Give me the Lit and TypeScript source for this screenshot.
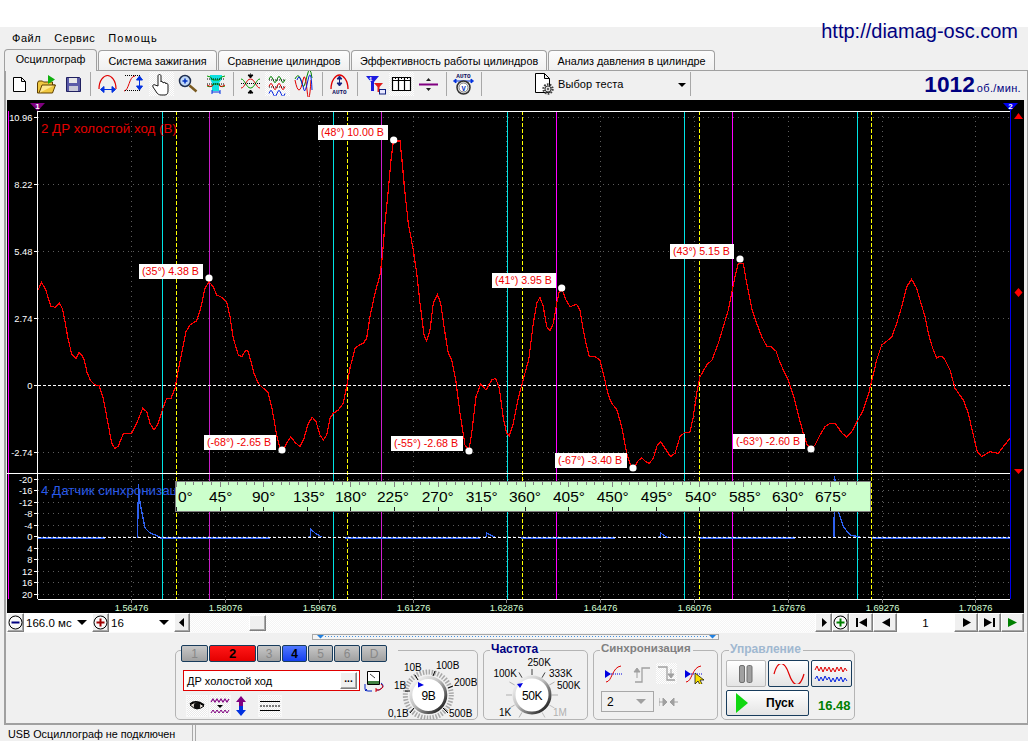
import { LitElement, html, svg, css } from 'lit';
import { customElement } from 'lit/decorators.js';

// red trace, screen coordinates read from the reference
const RED: [number, number][] = [
  [38, 290], [41.7, 282.3], [46, 290.7], [50.7, 306], [55, 307.3], [59.3, 303.3], [62.3, 308.3], [65, 321.7], [68.3, 340], [71.7, 354], [76, 358.3], [79.3, 352.3], [82.7, 356.7],
  [84.3, 360], [87.3, 373.3], [90.7, 380.7], [95, 385], [99, 385.3], [103.3, 398.3], [108.3, 425], [111.7, 443.3], [115, 448.7], [118.3, 446], [123.3, 434], [131.7, 433.3], [136.7, 423.3], [142.7, 408.3], [146.7, 411.7], [150, 423.3], [154, 430], [158.3, 423.3], [162.3, 410], [166.7, 398.3], [171, 398.3], [175, 388.3], [177.7, 373.3], [180.4, 360],
  [186, 331.7], [190, 325], [196.7, 320.7], [200.7, 308.3], [205, 288.3], [209, 281.7], [213.3, 286.7], [216.7, 295], [221.7, 297.3], [226.7, 301.7], [230, 316.7], [233.3, 338.3], [238.3, 355], [241.7, 356.7], [246, 350], [248.3, 351.7], [250.5, 360],
  [254, 373.3], [258.3, 383.3], [263.3, 388.3], [267.7, 391.7], [271.7, 406.7], [276.7, 435], [280, 448.3], [283.3, 450], [286.7, 443.3], [290.7, 436.7], [295, 442.3], [300, 446.7], [304, 438.3], [308.3, 423.3], [312.3, 417.3], [316, 421.7], [320, 435], [323.3, 440], [326.7, 435], [330, 418.3], [333.3, 413.3], [338.3, 410], [343.3, 403.3], [346.7, 386.7], [350, 368],
  [355, 348.3], [358.3, 345.7], [363.3, 343.3], [366.7, 338.3], [370, 316.7], [375, 293.3], [380, 275], [382.3, 256.7], [385, 223.3], [388.3, 190], [391, 160], [393.3, 141.7], [400, 140.7], [402.3, 163.3], [405, 193.3], [408.3, 223.3], [413.3, 250], [416.7, 273.3], [420, 303.3], [424, 335], [426.7, 341], [430, 330], [433.3, 303.3], [437.3, 294.3], [440.7, 303.3], [444, 326.7], [448.3, 353.3], [451.7, 360],
  [456, 381.7], [460, 413.3], [465, 445], [469, 450], [471.7, 433.3], [476, 396.7], [480.7, 384], [486, 390], [491.7, 380], [495.7, 378.3], [499.3, 388.3], [503.3, 418.3], [506.7, 433.3], [509.3, 436], [513.3, 423.3], [518.3, 398.3], [522.7, 381.7], [526.7, 366.7], [528.7, 360],
  [533.3, 323.3], [536.7, 303.3], [540, 297.3], [543.3, 306.7], [546.7, 326.7], [550, 331], [553.3, 323.3], [556.7, 303.3], [559.3, 291.7], [562.3, 290], [566, 300], [570, 306.7], [576.7, 304.3], [580, 310], [583.3, 330], [586.7, 346.7], [589.3, 356.7], [595, 356.7], [600, 360],
  [604, 376.7], [608.3, 395], [611.7, 403.3], [616.7, 409.3], [621.7, 426.7], [626.7, 453.3], [630.7, 466], [634, 468.3], [637.3, 461.7], [641.7, 457.7], [645.7, 461.7], [649.3, 463.3], [653.3, 458.3], [657.3, 445], [660.7, 441.7], [665, 448.3], [670.7, 456.7], [675, 453.3], [680, 436.7], [684.3, 432.7], [690, 432],
  [693.3, 416.7], [696.7, 393.3], [700, 376.7], [706.7, 365], [712, 360],
  [718.3, 343.3], [723.3, 326.7], [728.3, 310], [732.3, 290], [735, 276.7], [738.3, 263.3], [743.3, 263.3], [746.7, 283.3], [751.7, 308.3], [756.7, 323.3], [761.7, 336.7], [766.7, 346], [771, 346.7], [776, 351], [779, 360],
  [783.3, 370], [788.3, 380], [793.3, 395], [798.3, 415], [803.3, 433.3], [807.3, 445], [810.7, 449], [815, 445], [820, 435], [825, 426.7], [830, 423.3], [835.7, 424], [841.7, 432.7], [846.7, 437.3], [851.7, 431.7], [858.3, 419.3], [863.3, 410], [868.3, 395], [872.7, 376.7], [876.7, 360],
  [881.7, 345], [891.7, 337.3], [896.7, 323.3], [901.7, 306.7], [906.7, 286.7], [911.7, 279.3], [916.7, 288.3], [920, 300], [925, 316.7], [928.3, 333.3], [932.7, 348.3], [936.7, 358.3], [940, 356], [943.3, 357.3], [945, 360],
  [950, 370], [955, 388.3], [963.3, 400], [968.3, 413.3], [973.3, 435], [977.3, 451.7], [981.7, 456.7], [990, 451.7], [998.3, 453.3], [1003.3, 446.7], [1010, 438.3],
];

// sync channel pieces: flat runs and decay pulses
const BLUE_FLAT: [number, number][] = [[38, 105], [160, 270], [345, 480], [521, 615], [700, 795], [872, 1010]];
const BLUE_PULSE: [number, number][][] = [
  [[137.5, 538], [138.5, 484], [140, 503], [145, 528], [150, 533], [160, 537]],
  [[310, 538], [310.7, 529], [315, 533], [321.7, 537]],
  [[486, 537], [486.5, 533], [495, 537]],
  [[660, 537], [660.5, 533], [668, 538]],
  [[834, 538], [834.5, 476], [838.3, 511.7], [843.3, 526.7], [850, 535], [860, 537]],
];

const UPPER_AXIS = [['10.96', 117], ['8.22', 184.5], ['5.48', 251.5], ['2.74', 318.5], ['0', 385], ['-2.74', 452.5]] as const;
const LOWER_AXIS = ['-20', '-16', '-12', '-8', '-4', '0', '4', '8', '12', '16', '20'];
const TIMES = ['1.56476', '1.58076', '1.59676', '1.61276', '1.62876', '1.64476', '1.66076', '1.67676', '1.69276', '1.70876'];
const CYAN = [162, 333, 507, 684, 857];
const YELLOW = [176, 347, 522, 699, 871];
const MAGENTA: [number, string][] = [[209, '#c81ec8'], [381, '#d01ed0'], [556, '#ff00ff'], [732, '#ff00ff']];

// label box x, y, width, text, then the peak dot
const MARKS: [number, number, number, string, number, number][] = [
  [139, 264, 64, '(35°) 4.38 В', 209, 278],
  [318, 125, 70, '(48°) 10.00 В', 393.7, 140],
  [492, 273, 64, '(41°) 3.95 В', 561.7, 288],
  [670, 244, 64, '(43°) 5.15 В', 740, 259],
  [204, 435, 72, '(-68°) -2.65 В', 282, 450],
  [391, 436, 72, '(-55°) -2.68 В', 469, 451],
  [555, 453, 72, '(-67°) -3.40 В', 633, 468],
  [733, 434, 72, '(-63°) -2.60 В', 811, 449],
];

const DEGREES: [string, number][] = [
  ['0°', 178], ['45°', 209], ['90°', 252], ['135°', 293], ['180°', 335], ['225°', 377], ['270°', 421.7], ['315°', 465.7],
  ['360°', 509], ['405°', 553], ['450°', 596.7], ['495°', 640.7], ['540°', 685], ['585°', 729], ['630°', 772], ['675°', 815],
];

const TABS: [string, number][] = [
  ['Осциллограф', 93],
  ['Система зажигания', 119],
  ['Сравнение цилиндров', 132],
  ['Эффективность работы цилиндров', 196],
  ['Анализ давления в цилиндре', 167],
];

const CHANNELS = [
  { n: '1', w: 27 }, { n: '2', w: 47, cls: 'red' }, { n: '3', w: 24 }, { n: '4', w: 25, cls: 'blue' },
  { n: '5', w: 25 }, { n: '6', w: 26 }, { n: 'D', w: 26 },
];

const pts = (list: [number, number][]) => list.map((p) => p.join(',')).join(' ');
const px = (v: number) => Math.floor(v) + 0.5;

const SINE = 'M0 6 q2 -6 4 0 t4 0 t4 0 t4 0';

// toolbar icons are drawn on a 27x26 cell
const I = {
  doc: svg`<path d="M7.5 6.5 h8 l4 4 v10 h-12 z M15.5 6.5 v4 h4" fill="#fff" stroke="#000"/>`,
  folder: svg`<path d="M4.5 12 v10 h15 l3 -8 h-3 v-3 h-9 l-1 -1 h-4 z" fill="#f0c840" stroke="#604000"/><path d="M6 22 l3 -8 h13" fill="#ffe890" stroke="#604000"/><path d="M15 4 l7 4.5 -7 4.5 z" fill="#10b010"/>`,
  floppy: svg`<path d="M6.5 6.5 h13 l1 1 v13 h-14 z" fill="#5a5aa8" stroke="#202060"/><rect x="9" y="7" width="8" height="5" fill="#e8e8e8"/><rect x="9" y="15" width="9" height="5" fill="#c8c8d8"/>`,
  arcH: svg`<path d="M5 18 C5 9 10 4.5 13.5 4.5 C17 4.5 22 9 22 18" fill="none" stroke="#e00000" stroke-width="1.2"/><path d="M7 18.5 h14 M10 15.5 l-3.5 3 3.5 3 z M18 15.5 l3.5 3 -3.5 3 z" fill="#0030e0" stroke="#0030e0"/>`,
  sineV: svg`<path d="M3 20 C8 20 8 5 14 5" fill="none" stroke="#e00000"/><path d="M4 4.5 h15 M4 19.5 h15" stroke="#000" stroke-dasharray="1 1"/><path d="M18.5 7 v10 M15.5 9 l3 -4 3 4 z M15.5 15 l3 4 3 -4 z" fill="#0030e0" stroke="#0030e0"/>`,
  hand: svg`<path d="M7 14 c-1 -1 -3 0 -2 2 l4 6 c1 1 2 2 4 2 h4 c2 0 3 -2 3 -4 v-6 c0 -2 -2 -2 -2 -1 c0 -2 -2 -2 -3 -1 c0 -2 -2 -2 -2 -1 v-6 c0 -2 -3 -2 -3 0 v10 z" fill="#fff" stroke="#000" stroke-width=".9"/>`,
  zoom: svg`<circle cx="10" cy="10" r="5.5" fill="#c0d8f8" stroke="#203050" stroke-width="1.5"/><path d="M7.5 10 h5 M10 7.5 v5" stroke="#0030c0" stroke-width="1.5"/><path d="M14.5 14.5 l7 6" stroke="#7a5a20" stroke-width="2.5"/>`,
  area: svg`<path d="M8 4 h12 v4 l-3 4 v8 h-7 v-8 l-2 -4 z" fill="#10e0e0"/><path d="M5 5 q4 0 6 4 h6 q2 -4 6 -4 M5 15 q5 2 6 -2 h6 q1 4 6 2" fill="none" stroke="#00a000"/><path d="M5 14 q5 3 6 0 M17 14 q1 3 6 0" fill="none" stroke="#e00000"/><path d="M5 8 h18 M5 13 h18" stroke="#000" stroke-dasharray="1 1"/><path d="M10 21 h8 M10 19 v4 M18 19 v4" stroke="#0030e0"/>`,
  cross: svg`<path d="M4 17 C8 17 9 8 13.5 8 C18 8 19 17 23 17" fill="none" stroke="#e00000"/><path d="M4 8 C8 8 9 17 13.5 17 C18 17 19 8 23 8" fill="none" stroke="#00a000"/><path d="M4 12.5 h19" stroke="#000" stroke-dasharray="1 1"/><path d="M11 4 h5 l-2.5 3 z M11 22 h5 l-2.5 -3 z M13 3 h1 M13 22 h1" fill="#000" stroke="#000"/>`,
  stack: svg`<g transform="translate(5 2.5)" fill="none"><path d="${SINE}" stroke="#008000"/></g><g transform="translate(5 9.5)" fill="none"><path d="${SINE}" stroke="#e00000"/></g><g transform="translate(5 16.5)" fill="none"><path d="${SINE}" stroke="#0020e0"/></g><path d="M5 9 h16 M5 16 h16" stroke="#000" stroke-dasharray="1 1"/>`,
  overlay: svg`<path d="M4 8 q3 -6 5 -1 t3 8 t4 -10 t5 2" fill="none" stroke="#008000"/><path d="M4 9 q2 10 4 10 t4 -10 t4 10 t4 -10" fill="none" stroke="#e00000"/><path d="M6 9 q2 -6 4 0 t3 10 t4 -10 t4 10" fill="none" stroke="#0020e0"/>`,
  autoV: svg`<path d="M5 18 C5 9 10 4 13.5 4 C17 4 22 9 22 18" fill="none" stroke="#e00000" stroke-width="1.3"/><path d="M13.5 6 v8 M11 8 l2.5 -3 2.5 3 z M11 12 l2.5 3 2.5 -3 z" fill="#102080" stroke="#102080"/><text x="13.5" y="22.5" class="tiny">AUTO</text>`,
  filter: svg`<path d="M5 5 h13 l-5 6 v9 h-3 v-9 z" fill="#1a1ae0"/><path d="M13 12 h9 l-3.5 4 v5 h-2 v-5 z" fill="#e01a1a"/><rect x="18.5" y="18.5" width="6" height="4.5" fill="#e8e8ff" stroke="#102080"/><text x="9.5" y="10" class="tiny white">1</text>`,
  table: svg`<path d="M4.5 6.5 h18 v13 h-18 z M4.5 9.5 h18 M10.5 6.5 v13 M16.5 6.5 v13" fill="#fff" stroke="#000" stroke-width="1.2"/><path d="M7 7.5 h1 M13 7.5 h1 M19 7.5 h1" stroke="#000"/>`,
  divider: svg`<path d="M4 13.5 h19" stroke="#800080" stroke-width="2"/><path d="M11 10 l2.5 -3 2.5 3 z M11 17 l2.5 3 2.5 -3 z" fill="#202020"/>`,
  autoKnob: svg`<text x="13.5" y="6.5" class="tiny">AUTO</text><path d="M6 10 h15 M6 8 l-2.5 2 2.5 2 z M21 8 l2.5 2 -2.5 2 z" fill="#0030e0" stroke="#0030e0"/><circle cx="13.5" cy="16.5" r="6.5" fill="#e8e8e8" stroke="#303030" stroke-width="1.5"/><circle cx="13.5" cy="16.5" r="4.5" fill="#fff" stroke="#808080"/><text x="13.5" y="19.5" class="tiny blue">V</text>`,
};

const gear = svg`<circle cx="15" cy="17" r="4.5" fill="none" stroke="#404040" stroke-width="2.4" stroke-dasharray="1.6 1.2"/><circle cx="15" cy="17" r="3" fill="#e0e0e0" stroke="#404040"/><circle cx="15" cy="17" r="1" fill="#404040"/>`;

@customElement('app-root')
export class AppRoot extends LitElement {
  static styles = css`
    :host {
      display: block;
      width: 1028px;
      height: 741px;
      box-sizing: border-box;
      padding-top: 27px;
      font: 10.8px 'Liberation Sans', Arial, sans-serif;
      color: #000;
      background: #fff;
    }
    svg {
      display: block;
    }

    .app {
      height: 714px;
      background: #f0f0f0;
      display: flex;
      flex-direction: column;
    }

    .menu {
      height: 21px;
      display: flex;
      align-items: center;
      padding-left: 12px;
      gap: 13px;
      font-size: 11px;
      letter-spacing: 0.55px;
    }
    .menu .wide {
      letter-spacing: 1.2px;
    }
    .url {
      margin: -12px 10px 0 auto;
      font-size: 20px;
      letter-spacing: 0;
      color: #000080;
    }

    .tabs {
      height: 22px;
      display: flex;
      align-items: flex-end;
      padding-left: 4px;
    }
    .tab {
      height: 20px;
      margin-left: 1px;
      border: 1px solid #a0a0a0;
      border-bottom: 0;
      border-radius: 4px 4px 0 0;
      background: linear-gradient(#fcfcfc, #f0f0f0);
      display: flex;
      align-items: center;
      justify-content: center;
      box-sizing: border-box;
    }
    .tab.on {
      height: 22px;
      margin: 0 0 -1px 0;
      background: #f0f0f0;
      position: relative;
      z-index: 1;
      padding-bottom: 3px;
    }

    .frame {
      flex: 1;
      margin-left: 4px;
      border: solid #a0a0a0;
      border-width: 1px 1px 0 2px;
      display: flex;
      flex-direction: column;
      min-height: 0;
    }

    .toolbar {
      height: 26px;
      display: flex;
      align-items: center;
    }
    .tool {
      width: 27px;
      height: 26px;
      box-sizing: border-box;
      flex: none;
    }
    .tool.down {
      background: repeating-conic-gradient(#fff 0 25%, #ececec 0 50%) 0 0 / 2px 2px;
      box-shadow: inset 0 0 0 1px #f8f8f8;
      outline: 1px solid #f0f0f0;
      outline-offset: -1px;
    }
    .tool.small {
      width: 23px;
      height: 23px;
    }
    .tiny {
      font: bold 6px 'Liberation Mono', monospace;
      text-anchor: middle;
      fill: #101060;
    }
    .tiny.white {
      fill: #fff;
    }
    .tiny.blue {
      fill: #0030c0;
      font-size: 7px;
    }
    .sep {
      width: 1px;
      height: 24px;
      background: #a8a8a8;
      flex: none;
    }
    .s1 {
      margin: 0 3px 0 3px;
    }
    .s2 {
      margin: 0 3px 0 4px;
    }
    .select {
      width: 205px;
      display: flex;
      align-items: center;
      padding-left: 48px;
      box-sizing: border-box;
      font-size: 11px;
      letter-spacing: 0.1px;
      gap: 3px;
    }
    .select .arrow {
      margin: 2px 4px 0 auto;
    }
    .arrow {
      width: 0;
      height: 0;
      border: 4px solid transparent;
      border-top: 4px solid #000;
      border-bottom: 0;
      flex: none;
    }
    .rpm {
      margin-left: auto;
      margin-right: 6px;
      display: flex;
      align-items: baseline;
      font-size: 11px;
      color: #000080;
      letter-spacing: 0.35px;
    }
    .rpm b {
      font-size: 22.7px;
      letter-spacing: 0;
      margin-right: 2px;
    }

    .scope {
      margin: 3px 3px 0 1px;
      height: 513px;
      background: #000;
      flex: none;
    }
    .scope text {
      font-family: 'Liberation Sans', Arial, sans-serif;
    }
    .crisp {
      shape-rendering: crispEdges;
    }
    .grid {
      stroke: #5c5c5c;
      stroke-dasharray: 1 4;
    }
    .axis {
      fill: #fff;
      font-size: 9.33px;
      text-anchor: end;
    }
    .time {
      fill: #d4ffd4;
      font-size: 9.33px;
      text-anchor: middle;
    }
    .mark {
      fill: #f00000;
      font-size: 10.67px;
    }
    .title {
      font-size: 13.33px;
    }
    .deg {
      fill: #000;
      font-size: 15.5px;
    }
    .badge {
      fill: #fff;
      font: bold 8px 'Liberation Mono', monospace;
      text-anchor: middle;
    }
    .kl {
      font: 10px 'Liberation Sans', Arial, sans-serif;
    }
    .kl.big {
      font-size: 12px;
      letter-spacing: -0.5px;
    }
    .kl.dim {
      fill: #b0b0b0;
    }
    .knob {
      margin-top: 9px;
      flex: none;
    }

    .nav {
      margin-left: 1px;
      height: 19px;
      display: flex;
      align-items: stretch;
      flex: none;
      width: 1017px;
    }
    .btn {
      flex: none;
      box-sizing: border-box;
      border: 1px solid;
      border-color: #fff #808080 #808080 #fff;
      box-shadow: inset -1px -1px 0 #a8a8a8;
      background: #f0f0f0;
      display: flex;
      align-items: center;
      justify-content: center;
    }
    .field {
      flex: none;
      background: #fff;
      display: flex;
      align-items: center;
      box-sizing: border-box;
      padding: 0 5px 0 2px;
      font-size: 11.5px;
      white-space: nowrap;
      justify-content: space-between;
    }
    .field .arrow {
      border-width: 5px 5px 0;
      border-top-color: #000;
    }
    .f-time {
      width: 68px;
    }
    .f-count {
      width: 65px;
    }
    .f-page {
      width: 57px;
      justify-content: center;
      padding: 0;
    }
    .track {
      width: 625px;
      flex: none;
      display: flex;
      padding: 2px 0 1px 59px;
      box-sizing: border-box;
      background: repeating-conic-gradient(#fff 0 25%, #f4f4f4 0 50%) 0 0 / 2px 2px;
    }
    .thumb {
      width: 17px;
    }

    .controls {
      flex: 1;
      border-bottom: 2px solid #a0a0a0;
      box-shadow: inset 0 1px 0 #fafafa;
      min-height: 0;
    }
    .collapse {
      margin: 2px 0 0 306px;
      width: 407px;
      height: 6px;
      box-sizing: border-box;
      border: 1px solid #a8a8a8;
      background: #f4f4f4;
    }
    .collapse svg {
      overflow: visible;
    }
    .groups {
      display: flex;
      margin: 10px 0 0 169px;
      height: 70px;
    }
    .group {
      height: 70px;
      box-sizing: border-box;
      border: 1px solid #b4b4b4;
      border-radius: 5px;
      margin-right: 5px;
      position: relative;
      flex: none;
    }
    .legend {
      position: absolute;
      top: -9px;
      left: 6px;
      padding: 0 2px 0 1px;
      background: #f0f0f0;
      font-weight: 700;
      font-size: 12px;
      color: #000080;
    }
    .channels {
      width: 303px;
      display: flex;
    }
    .chan-col {
      width: 209px;
      flex: none;
    }
    .chan-row {
      display: flex;
      gap: 1px;
      margin: -6px 0 0 5px;
      background: #f0f0f0;
      width: 217px;
    }
    .chan {
      height: 17px;
      box-sizing: border-box;
      border: 1px solid #183c5c;
      border-radius: 2px;
      background: linear-gradient(#c8c8c8, #a0a0a0);
      color: #888;
      font-size: 12px;
      display: flex;
      align-items: center;
      justify-content: center;
      flex: none;
    }
    .chan.red {
      background: linear-gradient(#ff1818, #e40000);
      color: #000;
      font-weight: 700;
      font-size: 13px;
    }
    .chan.blue {
      background: linear-gradient(#5078ff, #1440f0);
      color: #000;
      font-weight: 700;
    }
    .combo-row {
      display: flex;
      margin: 8px 0 0 7px;
      gap: 4px;
      width: 205px;
    }
    .combo {
      width: 177px;
      height: 21px;
      flex: none;
      box-sizing: border-box;
      border: 1px solid #e00000;
      background: #fff;
      display: flex;
      align-items: center;
      justify-content: space-between;
      padding: 0 2px 0 3px;
      font-size: 11px;
    }
    .combo .btn {
      width: 17px;
      height: 17px;
      font-weight: 700;
      font-size: 10px;
      padding-bottom: 4px;
    }
    .icon-row {
      display: flex;
      align-items: center;
      margin: 3px 0 0 10px;
    }
    .sel-btn {
      width: 22px;
      height: 22px;
      flex: none;
      margin-right: 1px;
      border: 1px solid #f8f8f8;
      box-sizing: border-box;
      background: repeating-conic-gradient(#fff 0 25%, #e8e8e8 0 50%) 0 0 / 2px 2px;
    }
    .sel-btn.wide {
      width: 24px;
    }
    .updown {
      margin: 0 11px 0 3px;
    }
    .freq {
      width: 105px;
    }
    .sync {
      width: 125px;
      margin-right: 3px;
      padding: 11px 0 0 7px;
      box-sizing: border-box;
    }
    .sync .legend {
      color: #808080;
      font-size: 11.5px;
    }
    .sync-row {
      display: flex;
      align-items: center;
    }
    .sync-first {
      width: 26px;
      padding-left: 3px;
    }
    .sync-last {
      width: 24px;
      margin-left: 6px;
    }
    .sync-combo {
      width: 53px;
      height: 21px;
      margin-top: 6px;
      box-sizing: border-box;
      border: 1px solid #a8a8a8;
      display: flex;
      align-items: center;
      justify-content: space-between;
      padding: 0 7px 0 5px;
      font-size: 12px;
    }
    .sync-combo .arrow {
      border-width: 5px 5px 0;
      border-top-color: #a0a0a0;
    }
    .meet {
      margin: 7px 0 0 5px;
    }
    .ctrl {
      width: 134px;
      margin: 0;
      padding: 9px 0 0 4px;
      box-sizing: border-box;
    }
    .ctrl .legend {
      color: #a0b8d0;
      left: 7px;
    }
    .ctrl-row {
      display: flex;
      gap: 2px;
    }
    .ctrl-btn {
      width: 41px;
      height: 27px;
      box-sizing: border-box;
      border: 1px solid #183c5c;
      border-radius: 2px;
      background: linear-gradient(#fff, #e4e4e4);
      display: flex;
      align-items: center;
      justify-content: center;
      flex: none;
    }
    .ctrl-btn.off {
      border-color: #b8b8b8;
      width: 40px;
    }
    .start {
      width: 83px;
      height: 26px;
      margin-top: 3px;
      justify-content: flex-start;
      padding-left: 9px;
      font-weight: 700;
      font-size: 12px;
      gap: 18px;
    }
    .rate {
      color: #008000;
      font-weight: 700;
      font-size: 13px;
      margin: 11px 0 0 7px;
    }

    .status {
      height: 16px;
      flex: none;
      display: flex;
      align-items: center;
    }
    .status div {
      height: 16px;
      display: flex;
      align-items: center;
      box-sizing: border-box;
      border-right: 1px solid #a8a8a8;
    }
    .status .main {
      width: 193px;
      padding: 2px 0 0 8px;
    }
    .status .rest {
      margin-left: 2px;
      width: 800px;
      border-left: 1px solid #a8a8a8;
      border-right: 0;
    }
  `;

  private tool(icon: unknown, down = false) {
    return html`<div class="tool ${down ? 'down' : ''}">
      <svg width="27" height="26" viewBox="0 0 27 26">${icon}</svg>
    </div>`;
  }

  private renderScope() {
    const verts = TIMES.map((_, i) => px(131.7 + i * 93.8));
    const lowerY = LOWER_AXIS.map((_, i) => 479 + i * 11.55);
    return svg`
      <svg class="scope" width="1017" height="513" viewBox="7 100 1017 513">
        <g class="crisp">
          ${[117, 184, 251, 318, 452].map((y) => svg`<line class="grid" x1="38" x2="1010" y1=${y + 0.5} y2=${y + 0.5}></line>`)}
          ${lowerY.map((y) => svg`<line class="grid" x1="38" x2="1010" y1=${px(y)} y2=${px(y)}></line>`)}
          ${verts.map((x) => svg`<line class="grid" x1=${x} x2=${x} y1="111" y2="599"></line>`)}
          <line x1="8.5" x2="8.5" y1="111" y2="599" stroke="#ff00ff"></line>
          <line x1="37.5" x2="37.5" y1="111" y2="599" stroke="#fff"></line>
          ${CYAN.map((x) => svg`<line x1=${x + 0.5} x2=${x + 0.5} y1="111" y2="599" stroke="#00e4e4"></line>`)}
          ${MAGENTA.map(([x, c]) => svg`<line x1=${x + 0.5} x2=${x + 0.5} y1="111" y2="599" stroke=${c}></line>`)}
          ${YELLOW.map((x) => svg`<line x1=${x + 0.5} x2=${x + 0.5} y1="111" y2="599" stroke="#ffff00" stroke-dasharray="4 2"></line>`)}
          <line x1="1010.5" x2="1010.5" y1="106" y2="599" stroke="#0000f0"></line>
          <line x1="38" x2="1010" y1="111.5" y2="111.5" stroke="#fff"></line>
          <line x1="7" x2="1010" y1="473.5" y2="473.5" stroke="#fff"></line>
          <line x1="38" x2="1010" y1="599.5" y2="599.5" stroke="#fff"></line>

          ${UPPER_AXIS.map(([, y]) => svg`<line x1="34" x2="38" y1=${px(y)} y2=${px(y)} stroke="#fff"></line>`)}
          ${lowerY.map((y) => svg`<line x1="34" x2="38" y1=${px(y)} y2=${px(y)} stroke="#fff"></line>`)}
          ${verts.map((x) => svg`<line x1=${x} x2=${x} y1="599" y2="603" stroke="#808080"></line>`)}

          ${BLUE_FLAT.map(([a, b]) => svg`<line x1=${a} x2=${b} y1="538" y2="538" stroke="#2f62f0" stroke-width="2"></line>`)}
          ${BLUE_PULSE.map((p) => svg`<polyline points=${pts(p)} fill="none" stroke="#2f62f0" stroke-width="1.3"></polyline>`)}
          <line x1="38" x2="1010" y1="385.5" y2="385.5" stroke="#fff" stroke-dasharray="3 2"></line>
          <line x1="38" x2="1010" y1="537.5" y2="537.5" stroke="#fff" stroke-dasharray="3 2"></line>
          <polyline points=${pts(RED)} fill="none" stroke="#ff0000" stroke-width="1.2"></polyline>
        </g>

        ${UPPER_AXIS.map(([t, y]) => svg`<text class="axis" x="32.5" y=${y + 3.5}>${t}</text>`)}
        ${LOWER_AXIS.map((t, i) => svg`<text class="axis" x="32.5" y=${lowerY[i] + 3.5}>${t}</text>`)}
        ${TIMES.map((t, i) => svg`<text class="time" x=${verts[i]} y="611">${t}</text>`)}

        <text class="title" x="41" y="133" fill="#e40000">2 ДР холостой ход (В)</text>
        <text class="title" x="41" y="495" fill="#2a5ae8">4 Датчик синхронизации</text>

        ${MARKS.map(([x, y, w, t, dx, dy]) => svg`
          <rect x=${x} y=${y} width=${w} height="15" fill="#fff"></rect>
          <text class="mark" x=${x + 3} y=${y + 11}>${t}</text>
          <circle cx=${dx} cy=${dy} r="3.6" fill="#fff"></circle>
        `)}

        <g>
          <rect x="175.5" y="481.5" width="695" height="30" fill="#ccffcc" stroke="#808080"></rect>
          <g class="crisp" stroke="#808080">
            ${Array.from({ length: 79 }, (_, i) => px(176.4 + i * 8.72)).map((x, i) => svg`<line x1=${x} x2=${x} y1="482" y2=${i % 5 === 0 ? 487 : 485}></line>`)}
          </g>
          <g class="crisp" stroke="#202020">
            ${Array.from({ length: 16 }, (_, i) => px(176.4 + i * 43.6)).map((x) => svg`<line x1=${x} x2=${x} y1="507" y2="511"></line>`)}
          </g>
          ${DEGREES.map(([t, x]) => svg`<text class="deg" x=${x} y="502">${t}</text>`)}
          <rect x="870" y="481" width="1" height="31" fill="#808080"></rect>
        </g>

        <path d="M30 103 h15 l-7.5 8 z" fill="#800080"></path>
        <text class="badge" x="37.5" y="109">1</text>
        <path d="M1003 103 h15 l-7.5 8 z" fill="#0000f0"></path>
        <text class="badge" x="1010.5" y="109">2</text>
        <path d="M1014 119 h9 l-4.5 -6 z M1014 469 h9 l-4.5 5 z M1014.5 292.5 l4 -4.5 4 4.5 -4 4.5 z" fill="#ff0000"></path>
      </svg>
    `;
  }

  private renderVoltKnob() {
    return svg`<svg class="knob" width="92" height="60" viewBox="385 660 92 60">
      <defs>
        <linearGradient id="ring" x1="0" y1="0" x2="1" y2="1">
          <stop offset="0" stop-color="#fff"></stop><stop offset=".45" stop-color="#c0c0c0"></stop><stop offset="1" stop-color="#000"></stop>
        </linearGradient>
      </defs>
      <circle cx="428.3" cy="695" r="23" fill="none" stroke="#a8a8a8" stroke-width="5" stroke-dasharray="1.5 1.5"></circle>
      <circle cx="428.3" cy="695" r="17.5" fill="#fff" stroke="url(#ring)" stroke-width="3"></circle>
      <path d="M405 691 h5 M418 680 l-3 -5 M433 676 l2 -5 M448 688 l5 -2 M443 708 l5 5 M414 708 l-4 5" stroke="#000" fill="none"></path>
      <path d="M418 682 l6 3 -6 2.5 z" fill="#0000e0"></path>
      <text class="kl big" x="428.3" y="700" text-anchor="middle">9В</text>
      <text class="kl" x="404" y="671">10В</text>
      <text class="kl" x="436" y="669">100В</text>
      <text class="kl" x="454" y="686">200В</text>
      <text class="kl" x="394" y="689">1В</text>
      <text class="kl" x="388" y="717">0,1В</text>
      <text class="kl" x="449" y="717">500В</text>
    </svg>`;
  }

  private renderFreqKnob() {
    const ticks = [-150, -120, -90, -60, -30, 0, 30, 60, 90, 120, 150];
    return svg`<svg width="103" height="68" viewBox="484 651 103 68">
      <defs>
        <linearGradient id="ring2" x1="0" y1="0" x2="1" y2="1">
          <stop offset="0" stop-color="#fff"></stop><stop offset=".45" stop-color="#c0c0c0"></stop><stop offset="1" stop-color="#000"></stop>
        </linearGradient>
      </defs>
      ${ticks.map((a) => {
        const r = (a * Math.PI) / 180;
        const cx = 532 + Math.sin(r) * 20;
        const cy = 695 - Math.cos(r) * 20;
        return svg`<line x1=${cx} y1=${cy} x2=${cx + Math.sin(r) * 6} y2=${cy - Math.cos(r) * 6} stroke=${a === 150 || a === 120 ? '#c0c0c0' : a === 0 || a === -30 || a === 30 ? '#404040' : '#b0b0b0'}></line>`;
      })}
      <circle cx="532" cy="695" r="18" fill="#fff" stroke="url(#ring2)" stroke-width="3"></circle>
      <path d="M517 684 l6 -1 -3 5 z" fill="#0000e0"></path>
      <text class="kl big" x="532" y="700" text-anchor="middle">50K</text>
      <text class="kl" x="527.5" y="666">250K</text>
      <text class="kl" x="493.5" y="676.5">100K</text>
      <text class="kl" x="549" y="676.5">333K</text>
      <text class="kl" x="557" y="688.5">500K</text>
      <text class="kl" x="499" y="716">1K</text>
      <text class="kl dim" x="553" y="716">1M</text>
    </svg>`;
  }

  private renderChannels() {
    return html`<div class="group channels">
      <div class="chan-col">
        <div class="chan-row">
          ${CHANNELS.map((c) => html`<div class="chan ${c.cls ?? ''}" style="width:${c.w}px">${c.n}</div>`)}
        </div>
        <div class="combo-row">
          <div class="combo"><span>ДР холостой ход</span><div class="btn">...</div></div>
          <svg width="20" height="22" viewBox="0 0 20 22">
            <path d="M3.5 1.5 h12 v13 h-12 z" fill="#fff" stroke="#000"></path>
            <path d="M4 11 h11 v3 h-11 z" fill="#408040"></path>
            <path d="M6 4 l5 4" stroke="#404040"></path>
            <path d="M1 14 v5 q0 2 3 2 h4 M3 19 l-2 2 M17 13 q2 1 2 3 t-4 4 h-3" fill="none" stroke="#0020c0"></path>
            <path d="M15 20 h-3 M12 18 v4 M17 14 q2 2 2 3 t-4 3" fill="none" stroke="#e00000"></path>
          </svg>
        </div>
        <div class="icon-row">
          <div class="sel-btn">
            <svg width="20" height="20" viewBox="0 0 20 20">
              <path d="M3 9 q6 -5 14 1 q-7 6 -14 -1 z" fill="#e8e0d8" stroke="#000"></path>
              <circle cx="10" cy="10" r="3.2" fill="#101010"></circle>
              <path d="M3 8 q6 -5 14 1" fill="none" stroke="#000" stroke-width="1.6"></path>
            </svg>
          </div>
          <div class="sel-btn">
            <svg width="20" height="20" viewBox="0 0 20 20">
              <path d="M1 6 l2 -3 2 3 2 -3 2 3 2 -3 2 3 2 -3 2 3 2 -3" fill="none" stroke="#800080" stroke-width="1.2"></path>
              <path d="M1 17 l2 -3 2 3 2 -3 2 3 2 -3 2 3 2 -3 2 3 2 -3" fill="none" stroke="#800080"></path>
              <path d="M7 9 h6 l-3 3 z" fill="#000"></path>
            </svg>
          </div>
          <svg class="updown" width="12" height="22" viewBox="0 0 12 22">
            <path d="M6 1 l5 6 h-3 v4 h-4 v-4 h-3 z" fill="#800080"></path>
            <path d="M6 21 l5 -6 h-3 v-4 h-4 v4 h-3 z" fill="#0030e0"></path>
          </svg>
          <div class="sel-btn wide">
            <svg width="22" height="20" viewBox="0 0 22 20">
              <path d="M1 5.5 h20 M1 14.5 h20" stroke="#000"></path>
              <path d="M1 10 h20" stroke="#000" stroke-dasharray="2 1"></path>
            </svg>
          </div>
        </div>
      </div>
      ${this.renderVoltKnob()}
    </div>`;
  }

  private renderSync() {
    const curve = (marker: boolean) => svg`
      <svg width="20" height="20" viewBox="0 0 20 20">
        <path d="M2 18 C8 18 8 3 17 2" fill="none" stroke="#e00000"></path>
        <path d="M3 10 h15" stroke="#0000e0" stroke-dasharray="1 1"></path>
        <path d="M1 6 l6 4 -6 4 z" fill="#0000e0"></path>
        ${marker ? svg`<path d="M11 9 v11 l3 -3 2 4 2 -1 -2 -4 h4 z" fill="#f8e000" stroke="#000" stroke-width=".7"></path>` : ''}
      </svg>`;
    return html`<div class="group sync">
      <div class="legend">Синхронизация</div>
      <div class="sync-row">
        <div class="sync-first">${curve(false)}</div>
        <svg width="25" height="21" viewBox="0 0 25 21">
          <path d="M5 19 h7 v-14 h8" fill="none" stroke="#a0a0a0" stroke-width="1.3"></path>
          <path d="M7 15 v-9 M4 9 l3 -4 3 4 z" fill="#a0a0a0" stroke="#a0a0a0"></path>
        </svg>
        <div class="tool down small">
          <svg width="23" height="23" viewBox="0 0 23 23">
            <path d="M3 5 h9 v13 h8" fill="none" stroke="#a0a0a0" stroke-width="1.3"></path>
            <path d="M16 7 v8 M13 12 l3 4 3 -4 z" fill="#a0a0a0" stroke="#a0a0a0"></path>
          </svg>
        </div>
        <div class="sync-last">${curve(true)}</div>
      </div>
      <div class="sync-row">
        <div class="sync-combo"><span>2</span><i class="arrow"></i></div>
        <svg class="meet" width="20" height="10" viewBox="0 0 20 10">
          <path d="M0 5 h7 M0 1 l0 8 M19 5 h-7 M8 5 l-4 -4 v8 z M11 5 l4 -4 v8 z" fill="#a0a0a0" stroke="#a0a0a0"></path>
        </svg>
      </div>
    </div>`;
  }

  private renderControl() {
    return html`<div class="group ctrl">
      <div class="legend">Управление</div>
      <div class="ctrl-row">
        <div class="ctrl-btn off">
          <svg width="14" height="18" viewBox="0 0 14 18">
            <rect x=".5" y=".5" width="5" height="17" rx="1.5" fill="#a0a0a0" stroke="#707070"></rect>
            <rect x="8" y=".5" width="5" height="17" rx="1.5" fill="#a0a0a0" stroke="#707070"></rect>
          </svg>
        </div>
        <div class="ctrl-btn">
          <svg width="32" height="20" viewBox="0 0 32 20">
            <path d="M1 10 C5 -4 11 -4 16 10 S27 24 31 10" fill="none" stroke="#e00000" stroke-width="1.2"></path>
          </svg>
        </div>
        <div class="ctrl-btn">
          <svg width="36" height="22" viewBox="0 0 36 22">
            <path d="M1 7 l2 -4 2 5 2 -4 2 5 2 -5 2 4 2 -4 2 5 2 -4 2 4 2 -5 2 4 2 -4 2 5 2 -4 2 3" fill="none" stroke="#e00000"></path>
            <path d="M1 16 l2 -3 2 5 2 -4 2 4 2 -5 2 4 2 -3 2 5 2 -4 2 4 2 -5 2 4 2 -4 2 5 2 -4 2 3" fill="none" stroke="#0020e0"></path>
          </svg>
        </div>
      </div>
      <div class="ctrl-row">
        <div class="ctrl-btn start">
          <svg width="12" height="20" viewBox="0 0 12 20"><path d="M0 0 l12 10 -12 10 z" fill="#10d810"></path></svg>
          <span>Пуск</span>
        </div>
        <div class="rate">16.48</div>
      </div>
    </div>`;
  }

  private navBtn(w: number, d: string, fill = '#000') {
    return html`<div class="btn" style="width:${w}px">
      <svg width="13" height="11" viewBox="0 0 13 11"><path d=${d} fill=${fill}></path></svg>
    </div>`;
  }

  private zoomBtn(sign: 'minus' | 'plus', color: string) {
    return html`<div class="btn" style="width:17px">
      <svg width="15" height="15" viewBox="0 0 15 15">
        <circle cx="7.5" cy="7.5" r="6.5" fill="#f8f8f8" stroke="#000"></circle>
        <path d=${sign === 'plus' ? 'M3.5 7.5 h8 M7.5 3.5 v8' : 'M3.5 7.5 h8'} stroke=${color} stroke-width="2"></path>
      </svg>
    </div>`;
  }

  render() {
    return html`<div class="app">
      <div class="menu">
        <span>Файл</span><span>Сервис</span><span class="wide">Помощь</span>
        <span class="url">http://diamag-osc.com</span>
      </div>
      <div class="tabs">
        ${TABS.map(([t, w], i) => html`<div class="tab ${i === 0 ? 'on' : ''}" style="width:${w}px">${t}</div>`)}
      </div>
      <div class="frame">
        <div class="toolbar">
          ${this.tool(I.doc)}${this.tool(I.folder)}${this.tool(I.floppy)}
          <div class="sep s1"></div>
          ${this.tool(I.arcH)}${this.tool(I.sineV)}${this.tool(I.hand, true)}${this.tool(I.zoom)}${this.tool(I.area)}
          <div class="sep s2"></div>
          ${this.tool(I.cross)}${this.tool(I.stack, true)}${this.tool(I.overlay)}
          <div class="sep s2"></div>
          ${this.tool(I.autoV)}
          <div class="sep s2"></div>
          ${this.tool(I.filter)}${this.tool(I.table, true)}${this.tool(I.divider)}
          <div class="sep s2"></div>
          ${this.tool(I.autoKnob)}
          <div class="sep s2"></div>
          <div class="select">
            <svg width="22" height="24" viewBox="0 0 22 24">
              <path d="M2.5 1.5 h9 l5 5 v14 h-14 z M11.5 1.5 v5 h5" fill="#fff" stroke="#000"></path>
              ${gear}
            </svg>
            <span>Выбор теста</span>
            <i class="arrow"></i>
          </div>
          <div class="sep"></div>
          <div class="rpm"><b>1012</b> об./мин.</div>
        </div>

        ${this.renderScope()}

        <div class="nav">
          ${this.zoomBtn('minus', '#000080')}
          <div class="field f-time"><span>166.0 мс</span><i class="arrow"></i></div>
          ${this.zoomBtn('plus', '#a00000')}
          <div class="field f-count"><span>16</span><i class="arrow"></i></div>
          ${this.navBtn(16, 'M8 1 l-5 4.5 5 4.5 z')}
          <div class="track"><div class="btn thumb"></div></div>
          ${this.navBtn(17, 'M5 1 l5 4.5 -5 4.5 z')}
          ${this.zoomBtn('plus', '#008000')}
          ${this.navBtn(24, 'M1 1 h2 v9 h-2 z M12 1 l-8 4.5 8 4.5 z')}
          ${this.navBtn(24, 'M11 1 l-8 4.5 8 4.5 z')}
          <div class="field f-page">1</div>
          ${this.navBtn(24, 'M3 1 l8 4.5 -8 4.5 z')}
          ${this.navBtn(23, 'M1 1 l8 4.5 -8 4.5 z M10 1 h2 v9 h-2 z')}
          ${this.navBtn(23, 'M2 1 l9 4.5 -9 4.5 z', '#008000')}
        </div>

        <div class="controls">
          <div class="collapse">
            <svg width="405" height="4" viewBox="312 635 405 4">
              <path d="M324 636.5 H708" stroke="#4090e0" stroke-dasharray="1 2"></path>
              <path d="M316 635 h7 l-3.5 3.5 z M708 635 h7 l-3.5 3.5 z" fill="#2080e0"></path>
            </svg>
          </div>
          <div class="groups">
            ${this.renderChannels()}
            <div class="group freq"><div class="legend">Частота</div>${this.renderFreqKnob()}</div>
            ${this.renderSync()}
            ${this.renderControl()}
          </div>
        </div>
      </div>
      <div class="status">
        <div class="main">USB Осциллограф не подключен</div>
        <div class="rest"></div>
      </div>
    </div>`;
  }
}

declare global {
  interface HTMLElementTagNameMap {
    'app-root': AppRoot;
  }
}
